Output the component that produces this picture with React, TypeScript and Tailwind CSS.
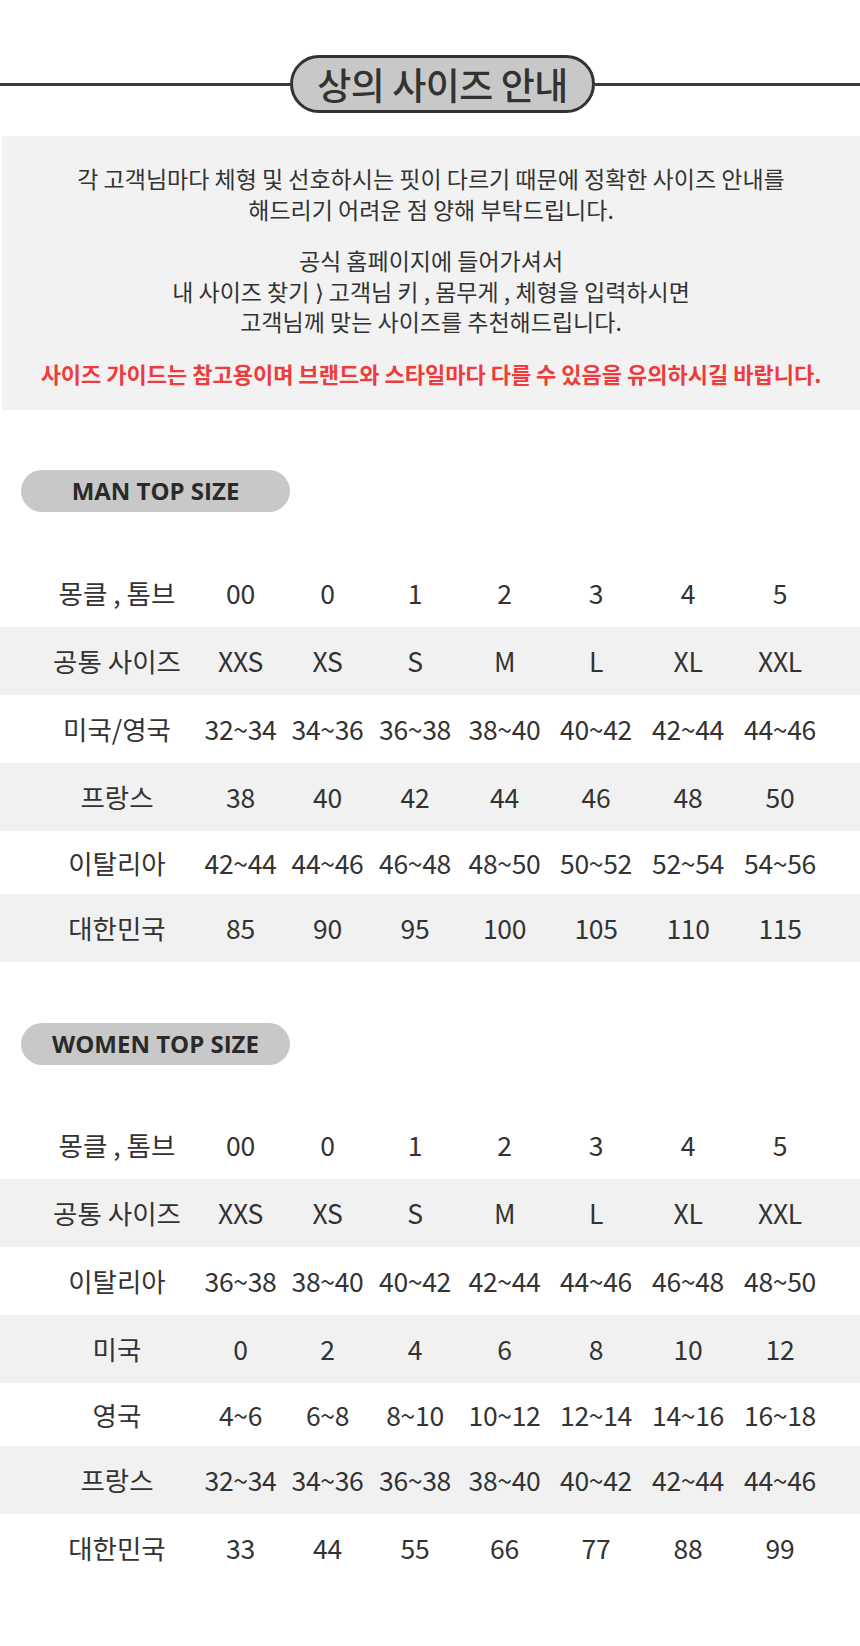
const kr = "font-['Noto_Sans_CJK_KR','Noto_Sans',sans-serif]";

type Row = { label: string; values: string[] };

const manRows: Row[] = [
  { label: "몽클 , 톰브", values: ["00", "0", "1", "2", "3", "4", "5"] },
  { label: "공통 사이즈", values: ["XXS", "XS", "S", "M", "L", "XL", "XXL"] },
  { label: "미국/영국", values: ["32~34", "34~36", "36~38", "38~40", "40~42", "42~44", "44~46"] },
  { label: "프랑스", values: ["38", "40", "42", "44", "46", "48", "50"] },
  { label: "이탈리아", values: ["42~44", "44~46", "46~48", "48~50", "50~52", "52~54", "54~56"] },
  { label: "대한민국", values: ["85", "90", "95", "100", "105", "110", "115"] },
];

const womenRows: Row[] = [
  { label: "몽클 , 톰브", values: ["00", "0", "1", "2", "3", "4", "5"] },
  { label: "공통 사이즈", values: ["XXS", "XS", "S", "M", "L", "XL", "XXL"] },
  { label: "이탈리아", values: ["36~38", "38~40", "40~42", "42~44", "44~46", "46~48", "48~50"] },
  { label: "미국", values: ["0", "2", "4", "6", "8", "10", "12"] },
  { label: "영국", values: ["4~6", "6~8", "8~10", "10~12", "12~14", "14~16", "16~18"] },
  { label: "프랑스", values: ["32~34", "34~36", "36~38", "38~40", "40~42", "42~44", "44~46"] },
  { label: "대한민국", values: ["33", "44", "55", "66", "77", "88", "99"] },
];

const SectionPill = ({ title }: { title: string }) => (
  <div className="ml-[21px] flex h-[42px] w-[269px] items-center justify-center rounded-full bg-[#c8c8c8]">
    <span className="font-['Open_Sans',sans-serif] text-[24px] font-bold leading-none text-[#2a2a2a]">
      {title}
    </span>
  </div>
);

const SizeTable = ({ rows }: { rows: Row[] }) => (
  <div className={`${kr} text-[26.5px] text-[#333333]`}>
    {rows.map((row, i) => (
      <div
        key={row.label + i}
        className={`grid grid-cols-[197px_87px_87px_88px_91px_92px_92px_92px] items-center ${
          i === 4 ? "h-[63px]" : "h-[68px]"
        } ${i % 2 === 1 ? "bg-[#f1f1f1]" : ""}`}
      >
        <div className="whitespace-nowrap pl-[37px] text-center">{row.label}</div>
        {row.values.map((v, j) => (
          <div key={j} className="whitespace-nowrap text-center tracking-[-0.3px]">
            {v}
          </div>
        ))}
      </div>
    ))}
  </div>
);

export default function App() {
  return (
    <div className={`${kr} w-[860px] bg-white pb-[63px]`}>
      {/* title */}
      <div className="flex items-center pt-[55px]">
        <div className="h-[3px] w-[290px] bg-[#3a3a3a]" />
        <div className="flex h-[58px] w-[305px] items-center justify-center rounded-full border-[3px] border-[#333333] bg-[#c8c8c8]">
          <span className="text-[37px] font-medium leading-none tracking-[-0.5px] text-[#333333]">
            상의 사이즈 안내
          </span>
        </div>
        <div className="h-[3px] flex-1 bg-[#3a3a3a]" />
      </div>

      {/* notice */}
      <div className="ml-[2px] mt-[23px] bg-[#f2f2f2] pb-[22px] pt-[27px] text-center text-[23px] leading-[30.5px] text-[#333333]">
        <p>
          각 고객님마다 체형 및 선호하시는 핏이 다르기 때문에 정확한 사이즈 안내를
          <br />
          해드리기 어려운 점 양해 부탁드립니다.
        </p>
        <p className="mt-[21px]">
          공식 홈페이지에 들어가셔서
          <br />내 사이즈 찾기 ⟩ 고객님 키 , 몸무게 , 체형을 입력하시면
          <br />
          고객님께 맞는 사이즈를 추천해드립니다.
        </p>
        <p className="mt-[21px] text-[22px] font-bold text-[#ee3b3b]">
          사이즈 가이드는 참고용이며 브랜드와 스타일마다 다를 수 있음을 유의하시길 바랍니다.
        </p>
      </div>

      <div className="mt-[60px]">
        <SectionPill title="MAN TOP SIZE" />
      </div>
      <div className="mt-[47px]">
        <SizeTable rows={manRows} />
      </div>

      <div className="mt-[61px]">
        <SectionPill title="WOMEN TOP SIZE" />
      </div>
      <div className="mt-[46px]">
        <SizeTable rows={womenRows} />
      </div>
    </div>
  );
}
